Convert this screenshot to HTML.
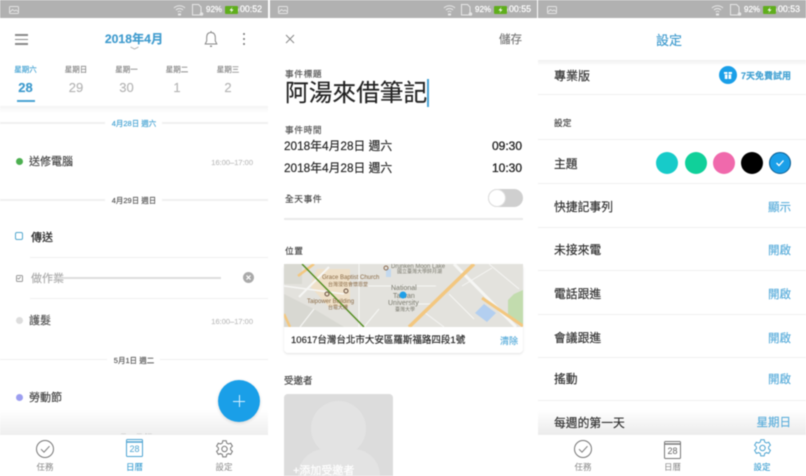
<!DOCTYPE html>
<html lang="zh-Hant">
<head>
<meta charset="utf-8">
<title>Calendar screens</title>
<style>
html,body{margin:0;padding:0;background:#fff;width:806px;height:476px;overflow:hidden}
#r{position:relative;width:806px;height:476px;overflow:hidden;background:#fff;font-family:"Liberation Sans","Noto Sans CJK TC",sans-serif;color:#333;filter:blur(.4px)}
#r *{box-sizing:border-box}
.a{position:absolute}
.t{position:absolute;white-space:nowrap;line-height:16px;height:16px;margin-top:-7px;-webkit-text-stroke:.15px currentColor}
.c{transform:translateX(-50%)}
.rt{transform:translateX(-100%)}
.st{position:absolute;top:0;height:18px;background:#b1b1b1}
.stt{position:absolute;white-space:nowrap;top:4px;font-size:8px;line-height:11px;color:#fff;-webkit-text-stroke:.2px #fff}
.tm{font-size:8.800px}
.ln{position:absolute;height:1px;background:#f0f0f0}
.blue{color:#45a3d3}
.tab{position:absolute;font-size:8.500px;line-height:12px;transform:translateX(-50%);white-space:nowrap;color:#888;top:460.500px}
.set{font-size:11.800px;color:#2e2e2e}
.val{font-size:11.500px;color:#5caedb}
</style>
</head>
<body>
<div id="r">

<!-- PANEL 1 -->
<div class="st" style="left:0;width:268px"></div>
<svg class="a" style="left:9px;top:6px" width="10" height="8" viewBox="0 0 10 8" fill="none" stroke="#e2e2e2" stroke-width="1"><rect x=".5" y=".5" width="9" height="7" rx="1"/><path d="M1 6l2.500-2.500 2 1.500 1.500-1 2 1.500"/></svg>
<svg class="a" style="left:173px;top:4px" width="13" height="12" viewBox="0 0 13 12" fill="none" stroke="#e6e6e6" stroke-width="1"><path d="M1 4c3-3 8-3 11 0M3 6c2-2 5-2 7 0M4.800 8c1-1 2.400-1 3.400 0"/><rect x="5" y="9.500" width="3" height="2" fill="#e6e6e6" stroke="none"/></svg>
<svg class="a" style="left:192px;top:4px" width="12" height="12" viewBox="0 0 12 12" fill="none" stroke="#e6e6e6" stroke-width="1"><path d="M.5.500h6l2.500 2.500v8h-8.500z"/><circle cx="9.500" cy="10" r="1.800" fill="#e6e6e6" stroke="none"/></svg>
<div class="stt" style="left:206px">92%</div>
<svg class="a" style="left:225px;top:6px" width="14" height="8" viewBox="0 0 14 8"><rect width="13" height="8" rx="1" fill="#5fae1c"/><rect x="13" y="2.500" width="1" height="3" fill="#e6e6e6"/><path d="M7.500 1l-3 3.500h2l-1 2.500 3-3.500h-2z" fill="#fff"/></svg>
<div class="stt tm" style="left:240px">00:52</div>

<div class="a" style="left:15px;top:34px;width:13px;height:1.500px;background:#8a8a8a"></div>
<div class="a" style="left:15px;top:38.500px;width:13px;height:1.500px;background:#8a8a8a"></div>
<div class="a" style="left:15px;top:43px;width:13px;height:1.500px;background:#8a8a8a"></div>
<div class="t c" style="left:134px;top:38px;font-size:12.200px;color:#3f9bce;font-weight:bold">2018年4月</div>
<svg class="a" style="left:130px;top:46px" width="9" height="4" viewBox="0 0 9 4" fill="none" stroke="#aaa" stroke-width=".8"><path d="M.5 1l4 2 4-2"/></svg>
<svg class="a" style="left:204px;top:31px" width="14" height="17" viewBox="0 0 14 17" fill="none" stroke="#888" stroke-width="1"><path d="M7 1.500c-3 0-4.300 2.200-4.300 5v3.500l-1.500 3h11.600l-1.500-3v-3.500c0-2.800-1.300-5-4.300-5z"/><path d="M6 15.200h2" stroke-width="1.400"/><path d="M7 0v1.500"/></svg>
<div class="a" style="left:243px;top:33px;width:2px;height:2px;border-radius:50%;background:#777"></div>
<div class="a" style="left:243px;top:38px;width:2px;height:2px;border-radius:50%;background:#777"></div>
<div class="a" style="left:243px;top:43px;width:2px;height:2px;border-radius:50%;background:#777"></div>

<div class="t c blue" style="left:25.500px;top:69px;font-size:7.500px">星期六</div>
<div class="t c" style="left:76px;top:69px;font-size:7.500px;color:#888">星期日</div>
<div class="t c" style="left:126.500px;top:69px;font-size:7.500px;color:#888">星期一</div>
<div class="t c" style="left:177px;top:69px;font-size:7.500px;color:#888">星期二</div>
<div class="t c" style="left:228px;top:69px;font-size:7.500px;color:#888">星期三</div>
<div class="t c" style="left:25.500px;top:87px;font-size:13px;font-weight:bold;color:#3f9bce">28</div>
<div class="t c" style="left:76px;top:87px;font-size:13px;color:#b5b5b5">29</div>
<div class="t c" style="left:126.500px;top:87px;font-size:13px;color:#b5b5b5">30</div>
<div class="t c" style="left:177px;top:87px;font-size:13px;color:#b5b5b5">1</div>
<div class="t c" style="left:228px;top:87px;font-size:13px;color:#b5b5b5">2</div>
<div class="a" style="left:17px;top:100px;width:18px;height:2px;background:#4aa3d3"></div>
<div class="a" style="left:0;top:106px;width:268px;height:7px;background:linear-gradient(#f4f4f4,#fff)"></div>

<div class="ln" style="left:0;top:122px;width:105px;height:1.500px"></div><div class="ln" style="left:162px;top:122px;width:106px;height:1.500px"></div>
<div class="t c blue" style="left:134px;top:122.500px;font-size:7.500px">4月28日 週六</div>
<div class="a" style="left:15.500px;top:157.500px;width:7px;height:7px;border-radius:50%;background:#4caf50"></div>
<div class="t" style="left:29px;top:161px;font-size:11px;color:#444">送修電腦</div>
<div class="t rt" style="left:253px;top:162px;font-size:7.500px;color:#c0c0c0">16:00–17:00</div>

<div class="ln" style="left:0;top:199px;width:105px;height:1.500px"></div><div class="ln" style="left:162px;top:199px;width:106px;height:1.500px"></div>
<div class="t c" style="left:134px;top:199.500px;font-size:7.500px;color:#555">4月29日 週日</div>
<div class="a" style="left:15px;top:232px;width:8px;height:8px;border:1.500px solid #55a9cf;border-radius:2px"></div>
<div class="t" style="left:31px;top:237px;font-size:11px;color:#333;font-weight:500">傳送</div>
<div class="ln" style="left:30px;top:257px;width:238px"></div>
<div class="a" style="left:15.500px;top:274.500px;width:7px;height:7px;border:1px solid #999;border-radius:1.500px"></div>
<svg class="a" style="left:16px;top:275px" width="6" height="6" viewBox="0 0 6 6" fill="none" stroke="#888" stroke-width=".8"><path d="M1.500 3l1.200 1.200 2-2.400"/></svg>
<div class="t" style="left:31px;top:278px;font-size:11px;color:#aaa">做作業</div>
<div class="a" style="left:57px;top:277px;width:164px;height:1.500px;background:#ddd"></div>
<svg class="a" style="left:243px;top:272px" width="11" height="11" viewBox="0 0 11 11"><circle cx="5.500" cy="5.500" r="5.500" fill="#aaa"/><path d="M3.500 3.500l4 4M7.500 3.500l-4 4" stroke="#fff" stroke-width="1.200"/></svg>
<div class="ln" style="left:30px;top:298px;width:238px"></div>
<div class="a" style="left:15.500px;top:316.500px;width:7px;height:7px;border-radius:50%;background:#ddd"></div>
<div class="t" style="left:29px;top:320px;font-size:11px;color:#555">護髮</div>
<div class="t rt" style="left:253px;top:321px;font-size:7.500px;color:#c0c0c0">16:00–17:00</div>

<div class="ln" style="left:0;top:358.500px;width:107px;height:1.500px"></div><div class="ln" style="left:160px;top:358.500px;width:108px;height:1.500px"></div>
<div class="t c" style="left:134px;top:359.500px;font-size:7.500px;color:#555">5月1日 週二</div>
<div class="a" style="left:15.500px;top:393.500px;width:7px;height:7px;border-radius:50%;background:#9c9ef0"></div>
<div class="t" style="left:29px;top:397px;font-size:11px;color:#444">勞動節</div>
<div class="a" style="left:0;top:410px;width:268px;height:24px;background:linear-gradient(rgba(240,240,240,0),#efefef)"></div>
<div class="t c" style="left:134px;top:437px;font-size:7.500px;color:#555">5月10日 週</div>
<div class="a" style="left:218px;top:380px;width:42px;height:42px;border-radius:50%;background:#1a9fe8;box-shadow:0 1px 3px rgba(0,0,0,.15)"></div>
<div class="a" style="left:233px;top:400.500px;width:12px;height:1px;background:#d5efff"></div>
<div class="a" style="left:238.500px;top:395px;width:1px;height:12px;background:#d5efff"></div>

<div class="a" style="left:0;top:434px;width:268px;height:42px;background:#fff;border-top:1px solid #eee"></div>
<svg class="a" style="left:36px;top:440px" width="18" height="18" viewBox="0 0 18 18" fill="none" stroke="#777" stroke-width="1"><circle cx="9" cy="9" r="8.500"/><path d="M5 9.200l3 3 5.500-6"/></svg>
<div class="tab" style="left:45px">任務</div>
<svg class="a" style="left:126px;top:439px" width="17" height="18" viewBox="0 0 17 18" fill="none" stroke="#4fa5d2"><rect x=".5" y=".5" width="16" height="17" rx="1"/><path d="M.5 3h16" stroke-width="1.500"/></svg>
<div class="a" style="left:126px;top:443px;width:17px;text-align:center;font-size:9px;line-height:12px;color:#4fa5d2">28</div>
<div class="tab" style="left:134.500px;color:#45a3d3;font-weight:500">日曆</div>
<svg class="a" style="left:214.500px;top:440px" width="19" height="18" viewBox="0 0 19 18" fill="none" stroke="#777" stroke-width="1"><path d="M7.800.7h3.400l.5 2.400 1.700.9 2.300-.8 1.700 3-1.800 1.600v2l1.800 1.600-1.700 3-2.300-.8-1.700.9-.5 2.400h-3.400l-.5-2.400-1.700-.9-2.300.8-1.700-3 1.800-1.600v-2l-1.800-1.600 1.700-3 2.300.8 1.700-.9z"/><circle cx="9.500" cy="9" r="2.700"/></svg>
<div class="tab" style="left:224px">設定</div>

<!-- PANEL 2 -->
<div class="st" style="left:270px;width:267px"></div>
<svg class="a" style="left:278px;top:6px" width="10" height="8" viewBox="0 0 10 8" fill="none" stroke="#e2e2e2" stroke-width="1"><rect x=".5" y=".5" width="9" height="7" rx="1"/><path d="M1 6l2.500-2.500 2 1.500 1.500-1 2 1.500"/></svg>
<svg class="a" style="left:443px;top:4px" width="13" height="12" viewBox="0 0 13 12" fill="none" stroke="#e6e6e6" stroke-width="1"><path d="M1 4c3-3 8-3 11 0M3 6c2-2 5-2 7 0M4.800 8c1-1 2.400-1 3.400 0"/><rect x="5" y="9.500" width="3" height="2" fill="#e6e6e6" stroke="none"/></svg>
<svg class="a" style="left:461px;top:4px" width="12" height="12" viewBox="0 0 12 12" fill="none" stroke="#e6e6e6" stroke-width="1"><path d="M.5.500h6l2.500 2.500v8h-8.500z"/><circle cx="9.500" cy="10" r="1.800" fill="#e6e6e6" stroke="none"/></svg>
<div class="stt" style="left:475px">92%</div>
<svg class="a" style="left:494px;top:6px" width="14" height="8" viewBox="0 0 14 8"><rect width="13" height="8" rx="1" fill="#5fae1c"/><rect x="13" y="2.500" width="1" height="3" fill="#e6e6e6"/><path d="M7.500 1l-3 3.500h2l-1 2.500 3-3.500h-2z" fill="#fff"/></svg>
<div class="stt tm" style="left:509px">00:55</div>

<svg class="a" style="left:285px;top:34px" width="10" height="10" viewBox="0 0 10 10" stroke="#888" stroke-width="1"><path d="M1 1l8 8M9 1l-8 8"/></svg>
<div class="t rt" style="left:522px;top:39px;font-size:11.500px;color:#777">儲存</div>
<div class="t" style="left:285px;top:73px;font-size:8.700px;color:#555;letter-spacing:.6px">事件標題</div>
<div class="t" style="left:285px;top:93px;font-size:23.700px;line-height:30px;height:30px;margin-top:-14px;color:#222">阿湯來借筆記</div>
<div class="a" style="left:427px;top:79px;width:1.500px;height:28px;background:#4aa3d3"></div>

<div class="t" style="left:285px;top:129px;font-size:8.700px;color:#555;letter-spacing:.6px">事件時間</div>
<div class="t" style="left:284px;top:145px;font-size:11.800px;color:#222">2018年4月28日 週六</div>
<div class="t rt" style="left:522px;top:145px;font-size:12px;color:#222;-webkit-text-stroke:.3px #222">09:30</div>
<div class="t" style="left:284px;top:167px;font-size:11.800px;color:#222">2018年4月28日 週六</div>
<div class="t rt" style="left:522px;top:167px;font-size:12px;color:#222;-webkit-text-stroke:.3px #222">10:30</div>
<div class="t" style="left:285px;top:198px;font-size:8.700px;color:#444;letter-spacing:.6px">全天事件</div>
<div class="a" style="left:488px;top:189px;width:35px;height:18px;border-radius:9px;background:#cfcfcf"></div>
<div class="a" style="left:488px;top:189px;width:18px;height:18px;border-radius:50%;background:#fff;border:1px solid #ddd"></div>
<div class="a" style="left:284px;top:218px;width:239px;height:1.500px;background:#eaeaea"></div>
<div class="t" style="left:285px;top:250px;font-size:8.700px;color:#444;letter-spacing:.6px">位置</div>

<div class="a" style="left:284px;top:264px;width:239px;height:89px;border-radius:4px;box-shadow:0 1px 2px rgba(0,0,0,.12);background:#fff"></div>
<svg class="a" style="left:284px;top:264px" width="239" height="63" viewBox="0 0 239 63">
<rect width="239" height="63" fill="#e3e2dd"/>
<polygon points="33,5 66,5 66,42 44,42 26,22" fill="#efe0c8"/>
<polygon points="0,0 18,0 18,20 0,20" fill="#d9d9d2"/>
<polygon points="0,30 30,45 60,63 0,63" fill="#d8d8d2"/>
<polygon points="230,30 239,26 239,62 224,50 224,36" fill="#c2dcae"/>
<polygon points="200,40 212,49 203,58 191,49" fill="#b3cff0"/>
<rect x="102" y="5" width="5" height="8" fill="#c2d8ee"/>
<g stroke="#f6f6f4" fill="none">
<path d="M170 0l62 63" stroke-width="3"/>
<path d="M0 22l60 8" stroke-width="1.500"/>
<path d="M45 3l-30 30" stroke-width="2"/>
<path d="M75 0v63M82 22h70M120 40h30M140 48l20 15M165 30l25 25M205 0l30 25M178 22l30 -18" stroke-width="1"/>
<path d="M30 45l-14 18M95 45l-15 18" stroke-width="1.200"/>
</g>
<path d="M125 63l65-63" stroke="#f3c77f" stroke-width="3.500"/>
<path d="M198 34l41 28" stroke="#f3c77f" stroke-width="3"/>
<path d="M0 50l6 13M30 0l-16 12" stroke="#f3c77f" stroke-width="2.500"/>
<path d="M18 0l62 63" stroke="#568f24" stroke-width="1.500"/>
<g font-family="Liberation Sans,Noto Sans CJK TC,sans-serif" fill="#7a7a6e">
<text x="107" y="4" font-size="6">Drunken Moon Lake</text>
<text x="113" y="9" font-size="5">國立臺灣大學醉月湖</text>
<text x="38" y="15" font-size="6" fill="#8a6a45">Grace Baptist Church</text>
<text x="44" y="22" font-size="5" fill="#8a6a45">台灣浸信會懷恩堂</text>
<text x="23" y="39" font-size="6" fill="#8a6a45">Taipower Building</text>
<text x="44" y="45" font-size="5" fill="#8a6a45">台電大樓</text>
<text x="107" y="26" font-size="7">National</text>
<text x="109" y="34" font-size="7">Taiwan</text>
<text x="104" y="41" font-size="7">University</text>
<text x="111" y="47" font-size="5">臺灣大學</text>
</g>
<circle cx="102" cy="4" r="2" fill="none" stroke="#8b6b52"/>
<circle cx="62" cy="27" r="2" fill="none" stroke="#6b5242"/>
<circle cx="43" cy="30" r="2" fill="none" stroke="#6b5242"/>
<circle cx="119" cy="31" r="3.500" fill="#1f9fe8"/>
</svg>
<div class="t" style="left:291px;top:340px;font-size:9.500px;color:#222">10617台灣台北市大安區羅斯福路四段1號</div>
<div class="t" style="left:500px;top:340px;font-size:9px;color:#5caedb">清除</div>

<div class="t" style="left:284px;top:381px;font-size:9.500px;color:#444">受邀者</div>
<div class="a" style="left:284px;top:394px;width:109px;height:82px;background:#dcdcdc;border-radius:4px 4px 0 0;overflow:hidden">
<div class="a" style="left:27px;top:7px;width:55px;height:55px;border-radius:50%;background:#e3e3e3"></div>
<div class="a" style="left:14px;top:55px;width:82px;height:27px;border-radius:41px 41px 0 0;background:#e3e3e3"></div>
<div class="a" style="left:9px;top:68px;width:95px;height:14px;overflow:hidden;font-size:11px;line-height:18px;color:#fff;-webkit-text-stroke:.2px #fff;white-space:nowrap">+添加受邀者</div>
</div>

<!-- PANEL 3 -->
<div class="st" style="left:538px;width:268px"></div>
<svg class="a" style="left:547px;top:6px" width="10" height="8" viewBox="0 0 10 8" fill="none" stroke="#e2e2e2" stroke-width="1"><rect x=".5" y=".5" width="9" height="7" rx="1"/><path d="M1 6l2.500-2.500 2 1.500 1.500-1 2 1.500"/></svg>
<svg class="a" style="left:711px;top:4px" width="13" height="12" viewBox="0 0 13 12" fill="none" stroke="#e6e6e6" stroke-width="1"><path d="M1 4c3-3 8-3 11 0M3 6c2-2 5-2 7 0M4.800 8c1-1 2.400-1 3.400 0"/><rect x="5" y="9.500" width="3" height="2" fill="#e6e6e6" stroke="none"/></svg>
<svg class="a" style="left:730px;top:4px" width="12" height="12" viewBox="0 0 12 12" fill="none" stroke="#e6e6e6" stroke-width="1"><path d="M.5.500h6l2.500 2.500v8h-8.500z"/><circle cx="9.500" cy="10" r="1.800" fill="#e6e6e6" stroke="none"/></svg>
<div class="stt" style="left:744px">92%</div>
<svg class="a" style="left:763px;top:6px" width="14" height="8" viewBox="0 0 14 8"><rect width="13" height="8" rx="1" fill="#5fae1c"/><rect x="13" y="2.500" width="1" height="3" fill="#e6e6e6"/><path d="M7.500 1l-3 3.500h2l-1 2.500 3-3.500h-2z" fill="#fff"/></svg>
<div class="stt tm" style="left:778px">00:53</div>

<div class="t c" style="left:669px;top:40px;font-size:13px;color:#3f9bce">設定</div>
<div class="a" style="left:538px;top:60px;width:268px;height:6px;background:linear-gradient(#f0f0f0,#fff)"></div>
<div class="t" style="left:554px;top:75px;font-size:12px;color:#333">專業版</div>
<div class="a" style="left:719px;top:66px;width:18px;height:18px;border-radius:50%;background:#1a9fe8"></div>
<svg class="a" style="left:724px;top:71px" width="8" height="8" viewBox="0 0 8 8" fill="#fff"><rect y="1" width="8" height="2"/><rect x=".8" y="3.500" width="6.400" height="4.500"/><rect x="3.500" y="0" width="1" height="8" fill="#1a9fe8"/></svg>
<div class="t" style="left:741px;top:75px;font-size:9px;color:#45a3d3;font-weight:bold">7天免費試用</div>
<div class="ln" style="left:538px;top:94px;width:268px"></div>
<div class="t" style="left:554px;top:122px;font-size:8.700px;color:#444">設定</div>
<div class="ln" style="left:538px;top:139px;width:268px"></div>

<div class="t set" style="left:554px;top:163px">主題</div>
<div class="a" style="left:656px;top:152px;width:22px;height:22px;border-radius:50%;background:#17cbc9"></div>
<div class="a" style="left:684.500px;top:152px;width:22px;height:22px;border-radius:50%;background:#10d09a"></div>
<div class="a" style="left:713px;top:152px;width:22px;height:22px;border-radius:50%;background:#f069ac"></div>
<div class="a" style="left:741px;top:152px;width:22px;height:22px;border-radius:50%;background:#000"></div>
<div class="a" style="left:769px;top:152px;width:22px;height:22px;border-radius:50%;background:#1a9fe8;border:1.500px solid #0d5c8f"></div>
<svg class="a" style="left:775px;top:158px" width="10" height="10" viewBox="0 0 10 10" fill="none" stroke="#fff" stroke-width="1.300"><path d="M1.500 5l2.500 2.500 4.500-5"/></svg>
<div class="ln" style="left:538px;top:183px;width:268px"></div>

<div class="t set" style="left:554px;top:206px">快捷記事列</div>
<div class="t rt val" style="left:791px;top:207px">顯示</div>
<div class="ln" style="left:538px;top:227px;width:268px"></div>
<div class="t set" style="left:554px;top:249px">未接來電</div>
<div class="t rt val" style="left:791px;top:250px">開啟</div>
<div class="ln" style="left:538px;top:270px;width:268px"></div>
<div class="t set" style="left:554px;top:293px">電話跟進</div>
<div class="t rt val" style="left:791px;top:294px">開啟</div>
<div class="ln" style="left:538px;top:314px;width:268px"></div>
<div class="t set" style="left:554px;top:337px">會議跟進</div>
<div class="t rt val" style="left:791px;top:338px">開啟</div>
<div class="ln" style="left:538px;top:357px;width:268px"></div>
<div class="t set" style="left:554px;top:378px">搖動</div>
<div class="t rt val" style="left:791px;top:379px">開啟</div>
<div class="ln" style="left:538px;top:400px;width:268px"></div>
<div class="a" style="left:538px;top:410px;width:268px;height:24px;background:linear-gradient(rgba(240,240,240,0),#ececec)"></div>
<div class="t set" style="left:554px;top:422px">每週的第一天</div>
<div class="t rt val" style="left:791px;top:422px">星期日</div>

<div class="a" style="left:538px;top:434px;width:268px;height:42px;background:#fff;border-top:1px solid #eee"></div>
<svg class="a" style="left:574px;top:440px" width="18" height="18" viewBox="0 0 18 18" fill="none" stroke="#777" stroke-width="1"><circle cx="9" cy="9" r="8.500"/><path d="M5 9.200l3 3 5.500-6"/></svg>
<div class="tab" style="left:583px">任務</div>
<svg class="a" style="left:664px;top:441px" width="17" height="18" viewBox="0 0 17 18" fill="none" stroke="#777"><rect x=".5" y=".5" width="16" height="17" rx="1"/><path d="M.5 3h16" stroke-width="1.500"/></svg>
<div class="a" style="left:664px;top:445px;width:17px;text-align:center;font-size:9px;line-height:12px;color:#666">28</div>
<div class="tab" style="left:672.500px">日曆</div>
<svg class="a" style="left:752.500px;top:439px" width="19" height="18" viewBox="0 0 19 18" fill="none" stroke="#4fa5d2" stroke-width="1"><path d="M7.800.7h3.400l.5 2.400 1.700.9 2.300-.8 1.700 3-1.800 1.600v2l1.800 1.600-1.700 3-2.300-.8-1.700.9-.5 2.400h-3.400l-.5-2.400-1.700-.9-2.300.8-1.700-3 1.800-1.600v-2l-1.800-1.600 1.700-3 2.300.8 1.700-.9z"/><circle cx="9.500" cy="9" r="2.700"/></svg>
<div class="tab" style="left:762px;color:#45a3d3;font-weight:500">設定</div>

</div>
</body>
</html>
